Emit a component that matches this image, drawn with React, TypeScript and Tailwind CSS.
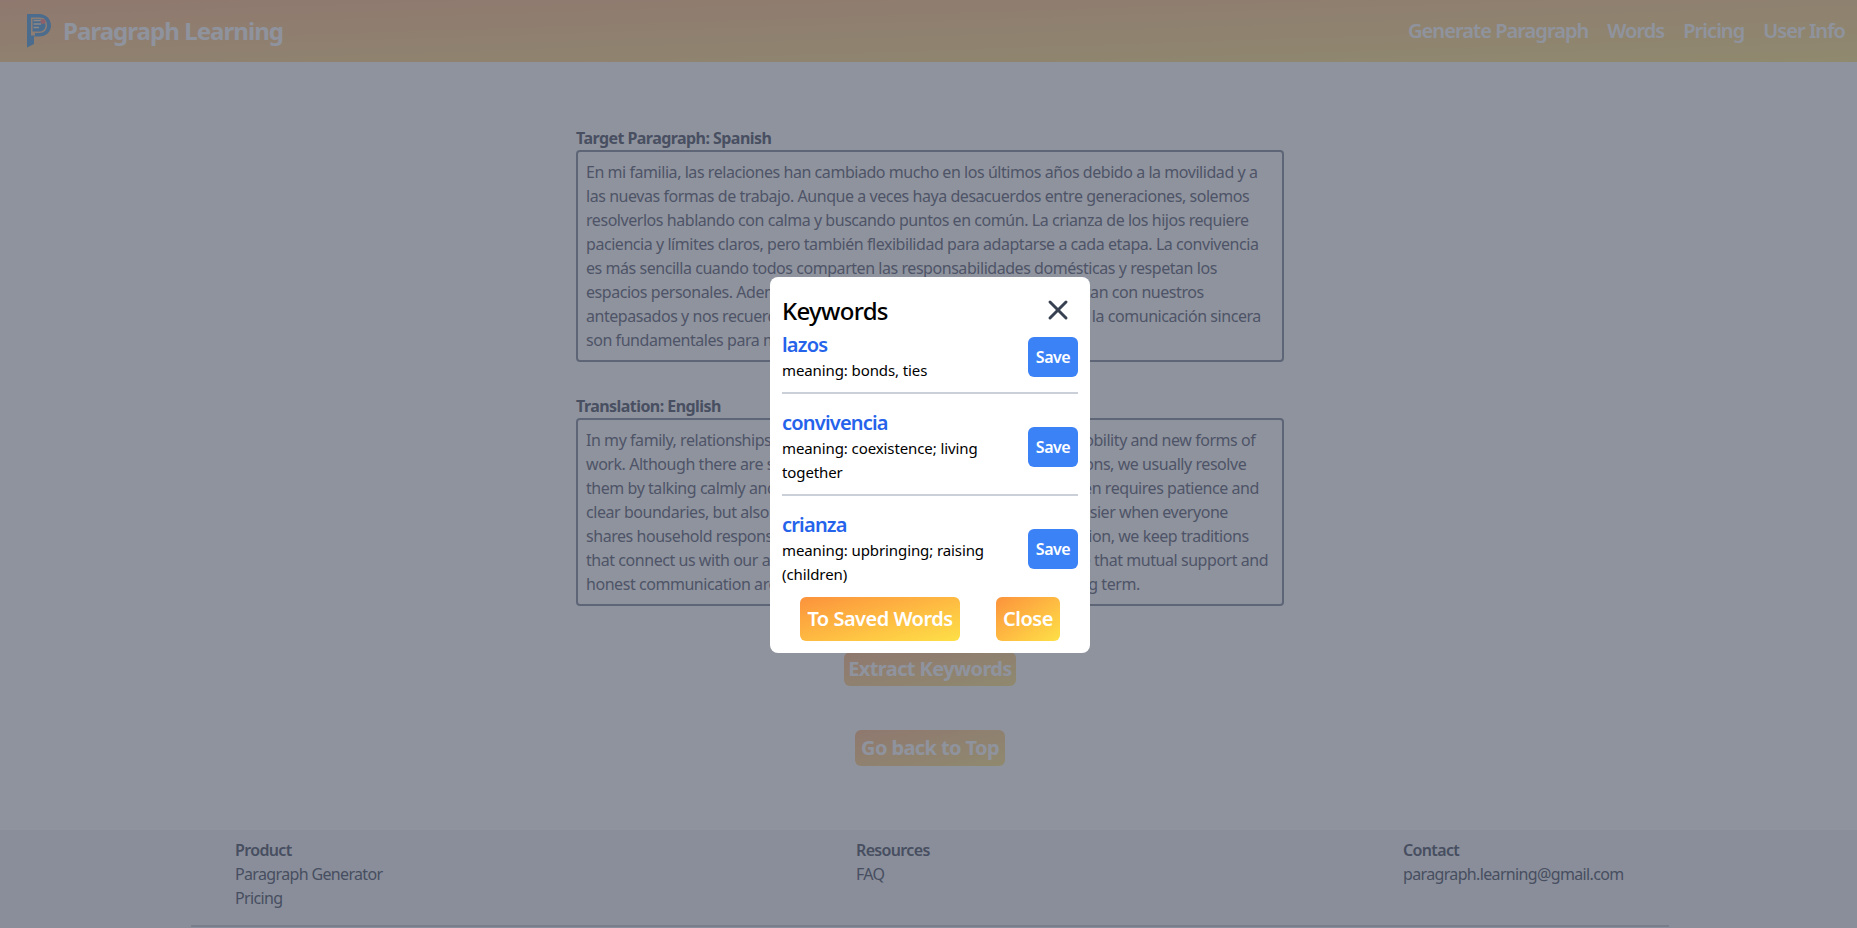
/**
 * App.tsx
 * Paragraph Learning: paragraph page with the Keywords modal open.
 */
import { X } from 'lucide-react';

const SPANISH_LINES = [
  'En mi familia, las relaciones han cambiado mucho en los últimos años debido a la movilidad y a',
  'las nuevas formas de trabajo. Aunque a veces haya desacuerdos entre generaciones, solemos',
  'resolverlos hablando con calma y buscando puntos en común. La crianza de los hijos requiere',
  'paciencia y límites claros, pero también flexibilidad para adaptarse a cada etapa. La convivencia',
  'es más sencilla cuando todos comparten las responsabilidades domésticas y respetan los',
  'espacios personales. Además, conservamos tradiciones que nos conectan con nuestros',
  'antepasados y nos recuerdan quiénes somos. Sé que el apoyo mutuo y la comunicación sincera',
  'son fundamentales para mantener la armonía familiar a largo plazo.',
];

const ENGLISH_LINES = [
  'In my family, relationships have changed a lot in recent years due to mobility and new forms of',
  'work. Although there are sometimes disagreements between generations, we usually resolve',
  'them by talking calmly and looking for common ground. Raising children requires patience and',
  'clear boundaries, but also flexibility for each stage. Living together is easier when everyone',
  'shares household responsibilities and respects personal space. In addition, we keep traditions',
  'that connect us with our ancestors and remind us of our roots. I believe that mutual support and',
  'honest communication are fundamental to keeping bonds over the long term.',
];

const KEYWORDS = [
  { word: 'lazos', meaning: ['meaning: bonds, ties'] },
  { word: 'convivencia', meaning: ['meaning: coexistence; living', 'together'] },
  { word: 'crianza', meaning: ['meaning: upbringing; raising', '(children)'] },
];

// ─── Logo ─────────────────────────────────────────────────────────────────────

function Logo() {
  return (
    <svg width="24" height="34" viewBox="0 0 24 34" className="shrink-0">
      <path d="M0 0H12C19 0 24 5 24 11.500C24 18 19 22.500 12 22.500H7V30L0 33.500Z" fill="#78b0dc" />
      <path d="M4 3.500H13C17.500 3.500 20 7 20 11.500C20 16 17 19 12.500 19H8V21.500H4Z" fill="#fcd3a8" />
      <path d="M5.500 5H12.500C16.500 5 18.500 8 18.500 11.500C18.500 15 16 17.500 12.500 17.500H5.500Z" fill="#78b0dc" />
      <path d="M6.500 6.500H14M6.500 10H14M6.500 13.500H12" stroke="#fde8d0" strokeWidth="1.400" />
      <circle cx="16" cy="7.500" r="2.500" fill="#fb9a9a" />
    </svg>
  );
}

function TextBox({ lines, height }: { lines: string[]; height: string }) {
  return (
    <div className={`w-[708px] ${height} rounded border-2 border-[#9ca3af] bg-white px-2 pt-[8px] text-[#7c8190] tracking-[-0.45px]`}>
      {lines.map((line) => (
        <div key={line} className="h-6 whitespace-nowrap leading-6">
          {line}
        </div>
      ))}
    </div>
  );
}

function GradientButton({ label, className }: { label: string; className: string }) {
  return (
    <button className={`rounded-md bg-gradient-to-br from-[#fb923c] to-[#fde047] font-semibold text-white ${className}`}>
      {label}
    </button>
  );
}

// Botões atrás do overlay têm o gradiente mais claro
function PaleButton({ label, className }: { label: string; className: string }) {
  return (
    <button className={`rounded-md bg-gradient-to-br from-[#ffc9a0] to-[#ffeba0] font-bold text-white tracking-[-0.6px] ${className}`}>
      {label}
    </button>
  );
}

export default function App() {
  return (
    <div className="relative h-[928px] overflow-hidden bg-white font-['Noto_Sans',sans-serif] text-[16px] tracking-[-0.4px]">
      {/* Barra superior */}
      <header className="flex h-[62px] items-center justify-between bg-gradient-to-br from-[#ffc9a0] to-[#ffeba0] pl-[27px] pr-[12px] text-white">
        <div className="flex items-center gap-[12px]">
          <Logo />
          <span className="text-[24px] font-bold tracking-[-0.95px]">Paragraph Learning</span>
        </div>
        <nav className="flex gap-[19px] text-[20px] font-semibold tracking-[-0.95px]">
          <span>Generate Paragraph</span>
          <span>Words</span>
          <span>Pricing</span>
          <span>User Info</span>
        </nav>
      </header>

      {/* Conteúdo principal */}
      <main className="flex h-[768px] flex-col items-center pl-[3px] pt-[64px]">
        <div className="w-[708px] font-bold text-[#717685] tracking-[-0.55px]">Target Paragraph: Spanish</div>
        <TextBox lines={SPANISH_LINES} height="h-[212px]" />
        <div className="mt-[32px] w-[708px] font-bold text-[#717685] tracking-[-0.55px]">Translation: English</div>
        <TextBox lines={ENGLISH_LINES} height="h-[188px]" />
        <PaleButton label="Extract Keywords" className="mt-[46px] h-[34px] w-[172px] text-[20px]" />
        <PaleButton label="Go back to Top" className="mt-[44px] h-[36px] w-[150px] text-[20px]" />
      </main>

      {/* Rodapé */}
      <footer className="h-[98px] bg-[#f3f4f6] text-[#6f7483] tracking-[-0.65px]">
        <div className="ml-[191px] mr-[188px] h-[97px] border-b-2 border-[#d1d5db]">
          <div className="flex pt-[8px] leading-6">
            <div className="ml-[44px] w-[621px]">
              <div className="font-semibold">Product</div>
              <div>Paragraph Generator</div>
              <div>Pricing</div>
            </div>
            <div className="w-[547px]">
              <div className="font-semibold">Resources</div>
              <div>FAQ</div>
            </div>
            <div>
              <div className="font-semibold">Contact</div>
              <div>paragraph.learning@gmail.com</div>
            </div>
          </div>
        </div>
      </footer>

      {/* Modal de palavras-chave */}
      <div className="absolute inset-0 flex items-center justify-center bg-[#1f273d]/50 pl-[3px] pt-[2px]">
        <div className="w-[320px] rounded-lg bg-white p-3 text-black">
          <div className="flex h-[42px] items-center justify-between pt-[1px]">
            <h2 className="text-[24px] font-medium tracking-[-0.7px]">Keywords</h2>
            <X size={32} strokeWidth={2.25} className="mb-[2px] mr-[4px] text-[#374151]" />
          </div>
          {KEYWORDS.map((item, index) => (
            <div key={item.word} className={index === 0 ? '' : 'mt-[10px] border-t-2 border-[#cbd0d8] pt-[15px]'}>
              <div className="flex items-center justify-between">
                <div>
                  <div className="text-[20px] font-semibold leading-[27px] tracking-[-0.8px] text-[#2563eb]">{item.word}</div>
                  {item.meaning.map((line) => (
                    <div key={line} className="text-[15px] leading-6 tracking-[-0.1px]">
                      {line}
                    </div>
                  ))}
                </div>
                <button className="h-[40px] w-[50px] rounded-md bg-[#3b82f6] text-[16px] font-semibold tracking-[-0.5px] text-white">Save</button>
              </div>
            </div>
          ))}
          <div className="mt-[11px] flex justify-center gap-[36px]">
            <GradientButton label="To Saved Words" className="h-[44px] w-[160px] text-[20px] tracking-[-0.5px]" />
            <GradientButton label="Close" className="h-[44px] w-[64px] text-[20px] tracking-[-0.5px]" />
          </div>
        </div>
      </div>
    </div>
  );
}
